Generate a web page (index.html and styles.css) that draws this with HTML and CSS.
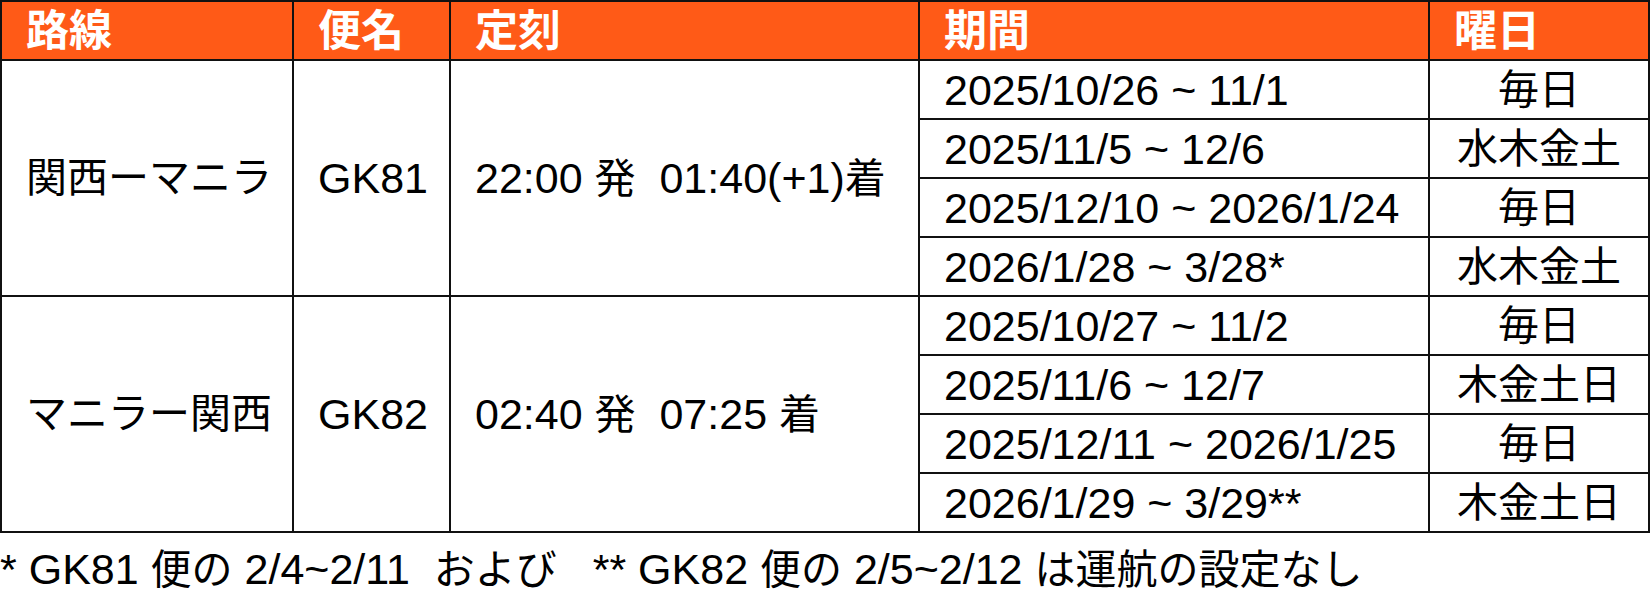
FILE: index.html
```html
<!DOCTYPE html>
<html lang="ja">
<head>
<meta charset="utf-8">
<title>運航スケジュール</title>
<link rel="stylesheet" href="styles.css">
</head>
<body>
<table class="schedule">
  <colgroup>
    <col class="c-route"><col class="c-flight"><col class="c-time"><col class="c-period"><col class="c-days">
  </colgroup>
  <thead>
    <tr><th>路線</th><th>便名</th><th>定刻</th><th>期間</th><th>曜日</th></tr>
  </thead>
  <tbody>
    <tr>
      <td rowspan="4" class="ja">関西ーマニラ</td>
      <td rowspan="4">GK81</td>
      <td rowspan="4" class="time">22:00 <span class="ja">発</span>  01:40(+1)<span class="ja">着</span></td>
      <td>2025/10/26 ~ 11/1</td><td class="days ja">毎日</td>
    </tr>
    <tr><td>2025/11/5 ~ 12/6</td><td class="days ja">水木金土</td></tr>
    <tr><td>2025/12/10 ~ 2026/1/24</td><td class="days ja">毎日</td></tr>
    <tr><td>2026/1/28 ~ 3/28*</td><td class="days ja">水木金土</td></tr>
    <tr>
      <td rowspan="4" class="ja">マニラー関西</td>
      <td rowspan="4">GK82</td>
      <td rowspan="4" class="time">02:40 <span class="ja">発</span>  07:25 <span class="ja">着</span></td>
      <td>2025/10/27 ~ 11/2</td><td class="days ja">毎日</td>
    </tr>
    <tr><td>2025/11/6 ~ 12/7</td><td class="days ja">木金土日</td></tr>
    <tr><td>2025/12/11 ~ 2026/1/25</td><td class="days ja">毎日</td></tr>
    <tr><td>2026/1/29 ~ 3/29**</td><td class="days ja">木金土日</td></tr>
  </tbody>
</table>
<p class="note">* GK81 <span class="ja">便の</span> 2/4~2/11  <span class="ja">および</span>   ** GK82 <span class="ja">便の</span> 2/5~2/12 <span class="ja">は運航の設定なし</span></p>
</body>
</html>
```
FILE: styles.css
```css
html, body {
  margin: 0;
  padding: 0;
  background: #fff;
}
body {
  font-family: "Liberation Sans", "Noto Sans CJK JP", sans-serif;
  font-size: 43px;
  color: #000;
}
.ja {
  font-size: 41px;
}
.schedule {
  border-collapse: collapse;
  table-layout: fixed;
  width: 1648px;
}
.c-route { width: 292px; }
.c-flight { width: 157px; }
.c-time { width: 469px; }
.c-period { width: 510px; }
.c-days { width: 220px; }
.schedule th,
.schedule td {
  border: 2px solid #111;
  padding: 0 0 0 24px;
  text-align: left;
  vertical-align: middle;
  line-height: 44px;
  white-space: nowrap;
}
.schedule th {
  background: #ff5a17;
  color: #fff;
  font-weight: bold;
  font-size: 43px;
  height: 57px;
}
.schedule td {
  height: 57px;
}
.schedule td.days {
  text-align: center;
  padding: 0;
}
.schedule td.time {
  white-space: pre;
}
.note {
  margin: 12px 0 0 0;
  line-height: 48px;
  white-space: pre;
}
```
